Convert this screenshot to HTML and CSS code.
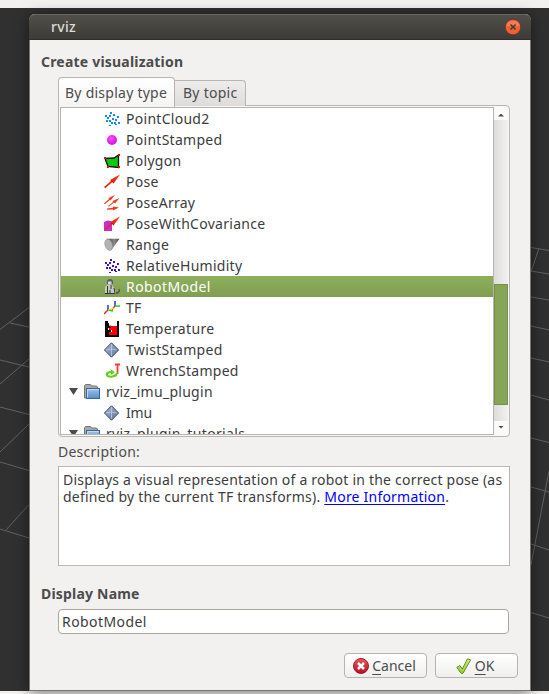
FILE: index.html
```html
<!DOCTYPE html>
<html lang="en">
<head>
<meta charset="utf-8">
<title>rviz</title>
<link rel="stylesheet" href="styles.css">
</head>
<body>
<svg width="0" height="0" class="defs">
  <defs>
    <linearGradient id="blue" x1="0" y1="0" x2="0" y2="1"><stop offset="0" stop-color="#a5c5e8"/><stop offset="1" stop-color="#568dcd"/></linearGradient>
    <linearGradient id="steel" x1="0" y1="0" x2="1" y2="1"><stop offset="0" stop-color="#a9bbd9"/><stop offset="1" stop-color="#607499"/></linearGradient>
    <linearGradient id="red" x1="0" y1="0" x2="0" y2="1"><stop offset="0" stop-color="#ec5853"/><stop offset="1" stop-color="#b40d2c"/></linearGradient>
    <linearGradient id="green" x1="0" y1="0" x2="0" y2="1"><stop offset="0" stop-color="#d0ed8c"/><stop offset="1" stop-color="#9dcb2c"/></linearGradient>
    <radialGradient id="magenta" cx=".4" cy=".35"><stop offset="0" stop-color="#ff4dff"/><stop offset="1" stop-color="#d820dc"/></radialGradient>
    <linearGradient id="cone" x1="0" y1="0" x2="1" y2="0"><stop offset="0" stop-color="#444"/><stop offset=".6" stop-color="#888"/><stop offset="1" stop-color="#444"/></linearGradient>
    <symbol id="i-dots" viewBox="0 0 16 16"><path d="M6 1h2v2H6zM9 3h2v2H9zM1 4h2v2H1zM5 4h2v2H5zM13 5h2v2h-2zM3 6h2v2H3zM8 7h2v2H8zM11 8h2v2h-2zM2 9h2v2H2zM5 9h2v2H5zM14 11h2v2h-2zM10 11h2v2h-2zM7 11h2v2H7zM5 14h2v1H5zM11 13h2v1h-2z" fill="currentColor"/></symbol>
    <symbol id="i-diamond" viewBox="0 0 16 16"><path d="M7.500 .8 14.600 8 7.500 15.200 .4 8z" fill="url(#steel)" stroke="#35466b"/><path d="M7.500 2v12M2 8l5.500-1L13 8" stroke="#d0dcf0" fill="none" stroke-width=".6"/></symbol>
    <symbol id="i-folder" viewBox="0 0 16 16"><path d="M.5 14V1.500l1-1h5l1 1.500h5l1 1V12z" fill="#aaa" stroke="#747474"/><rect x="2.500" y="4.500" width="13" height="10" fill="url(#blue)" stroke="#3465a4"/><path d="M3.500 13.500v-8h11" fill="none" stroke="#c3d9f0"/></symbol>
  </defs>
</svg>
<div class="desktop">
  <svg class="grid" width="549" height="694" viewBox="0 0 549 694">
    <path d="M0 329.500 29 307.500M10 323l19 4M0 360l29 7M0 384l29-25M0 407l29 7.500M0 452l29-28M0 462l29 8.500M0 529l29 9M6 530l23-25.500M531 247.500l18 3M531 271l18 3M531 297l18 3M531 326l18 4M531 358l18 4M531 395l18 5M531 438l18 4.500M531 487l18 5M531 544l18 6M531 612.500l18 5.500M539 248l-8 24M549 471l-18 94"/>
  </svg>
  <div class="strip top"></div>
  <div class="strip bottom"></div>
  <main class="dialog">
    <header class="titlebar"><span class="t-title">rviz</span>
      <svg class="close" width="18" height="18" viewBox="0 0 18 18"><circle cx="9" cy="9" r="7.800" fill="#ef6035" stroke="#65392e"/><path d="M2.200 8a7 7 0 0 1 13.600 0" fill="#f47b58"/><path d="m6.500 6.500 5 5m0-5-5 5" stroke="#443a34" stroke-width="1.500"/></svg>
    </header>
    <div class="content">
      <h2 class="t-create">Create visualization</h2>
      <div class="tabs"><div class="tab active"><span class="t-type">By display type</span></div><div class="tab"><span class="t-topic">By topic</span></div></div>
      <div class="frame">
        <div class="tree">
          <div class="row"><svg class="sky"><use href="#i-dots"/></svg><span>PointCloud2</span></div>
          <div class="row"><svg viewBox="0 0 16 16"><circle cx="8" cy="8" r="5" fill="url(#magenta)"/></svg><span>PointStamped</span></div>
          <div class="row"><svg viewBox="0 0 16 16"><path d="M1 5.500 10 5l4.500-3v12.500L4 13.500z" fill="#0bc80b" stroke="#111" stroke-width="1.300"/><path d="M0 4h2v2H0zM14 1h2v2h-2zM3 13h2v2H3zM14 13h2v2h-2z" fill="red"/></svg><span>Polygon</span></div>
          <div class="row"><svg viewBox="0 0 16 16"><path d="m0 13 7-6-1-1L16 .5l-6.500 9-1-1.500L1.200 14.200z" fill="#f9250a"/><path d="m7 6.500 3 2.500" stroke="#9e1a0c"/></svg><span>Pose</span></div>
          <div class="row"><svg viewBox="0 0 16 16"><path d="M0 8.500 5 4l-.5-1L11 0 6.500 5.500 6 5 .7 9.300zM4 11l5-4-.5-1L15.500 3 11 8.500 10 7.500 4.500 11.800zM3 13.500l6-.8V11.500l6 1-6 3v-1l-6 .3z" fill="#f23b1e"/></svg><span>PoseArray</span></div>
          <div class="row"><svg viewBox="0 0 16 16"><path d="M0 6q5-3 8 0v9H0z" fill="#c62ed0"/><path d="m.5 13 7-6-1-1L16 .5l-6.500 9-1-1.500L1.500 14z" fill="#f9250a"/><path d="m7 6.500 3 2.500" stroke="#9e1a0c"/></svg><span>PoseWithCovariance</span></div>
          <div class="row"><svg viewBox="0 0 16 16"><path d="M3 1.800h12.500L7 13.500z" fill="url(#cone)"/><ellipse cx="4.600" cy="7.800" rx="3.600" ry="5.800" transform="rotate(-18 4.600 7.800)" fill="#b3b3b3" stroke="#999" stroke-width=".6"/></svg><span>Range</span></div>
          <div class="row"><svg class="violet"><use href="#i-dots"/></svg><span>RelativeHumidity</span></div>
          <div class="row selected"><svg viewBox="0 0 16 16"><path d="M3 3q0-3 3-3t3 3v2H3z" fill="#555b70"/><path d="M4 2.500h3.500V5H4z" fill="#d9dde0"/><path d="M1 8q3-4 7-2l3 4 1 4H1z" fill="#c3cac2"/><path d="M3.500 7v7M7 6v4M10 9l1 5M1 14.500h10M6 11v3" stroke="#303530" fill="none"/><path d="M12 14q4 0 3-4" stroke="#4a5148" stroke-width="1.300" fill="none"/></svg><span class="t-robot">RobotModel</span></div>
          <div class="row"><svg viewBox="0 0 16 16"><path d="M4 11V5M11 6V1" stroke="#1721e8" stroke-width="1.400"/><path d="m0 14 4-4m4-.5L11 6" stroke="#e32a16" stroke-width="1.400"/><path d="M11 6h5M4 10l5 1" stroke="#19d31e" stroke-width="1.300"/><path d="m4 10 6-2" stroke="#eadb24"/></svg><span>TF</span></div>
          <div class="row"><svg viewBox="0 0 16 16"><path d="M1 0h3v2h1v3h2v2H4v2h3v2H5v2h8V0h2v16H1z" fill="#080808"/><path d="M5 4l3 1h5v9H5v-3h3V9H5V7h2z" fill="red"/></svg><span class="t-temp">Temperature</span></div>
          <div class="row"><svg><use href="#i-diamond"/></svg><span class="t-temp">TwistStamped</span></div>
          <div class="row"><svg viewBox="0 0 16 16"><path d="M11 1.500h5M13.500 1v10" stroke="#ef3e38" stroke-width="1.800"/><path d="M2 10q1-2 5-2l-1-2 5 3-4 3v-2q-3 0-3 2 4 2 7-1l3-2-1 4q-5 3-10 1Q1 12 2 10z" fill="#5fd315"/></svg><span>WrenchStamped</span></div>
          <div class="row group"><i class="arrow"></i><svg><use href="#i-folder"/></svg><span>rviz_imu_plugin</span></div>
          <div class="row"><svg><use href="#i-diamond"/></svg><span class="t-imu">Imu</span></div>
          <div class="row group"><i class="arrow"></i><svg><use href="#i-folder"/></svg><span class="t-temp">rviz_plugin_tutorials</span></div>
        </div>
        <div class="scrollbar"><div class="step"><i class="up"></i></div><div class="trough"><div class="thumb"></div></div><div class="step"><i class="down"></i></div></div>
      </div>
      <div class="label"><span class="t-desc">Description:</span></div>
      <div class="description"><span class="t-l1">Displays a visual representation of a robot in the correct pose (as</span><br><span class="t-l2">defined by the current TF transforms). <a>More Information</a>.</span></div>
      <h2 class="t-name">Display Name</h2>
      <div class="input"><span class="t-robot">RobotModel</span></div>
      <div class="buttons">
        <div class="button"><svg width="16" height="16" viewBox="0 0 16 16"><circle cx="8" cy="8" r="7.500" fill="url(#red)" stroke="#a3192e"/><path d="m5 5 6 6m0-6-6 6" stroke="#fff" stroke-width="2.500"/></svg><span class="t-cancel"><u>C</u>ancel</span></div>
        <div class="button ok"><svg width="16" height="16" viewBox="0 0 16 16"><path d="m.8 9.500 3-2 2.500 3.500L11.500.8l3.200 1L7 15.300H5z" fill="url(#green)" stroke="#5c9127"/></svg><span class="t-ok"><u>O</u>K</span></div>
      </div>
    </div>
  </main>
</div>
</body>
</html>
```
FILE: styles.css
```css
* { box-sizing: border-box; }
body { margin: 0; font: 14px/21px "Noto Sans", sans-serif; color: #4c4c4c; }
.defs { position: absolute; }
.desktop { position: relative; width: 549px; height: 694px; overflow: hidden; background: #303030; padding: 14px 19px 4px 29px; }
.grid { position: absolute; left: 0; top: 0; fill: none; stroke: #626262; stroke-width: 1; }
.strip { position: absolute; left: 0; width: 549px; background: #f2f1f0; }
.strip.top { top: 0; height: 8px; }
.strip.bottom { bottom: 0; height: 3px; }
.dialog { position: relative; width: 502px; height: 677px; border: 1px solid #77756f; border-top: 0; border-radius: 6px 6px 0 0; background: #f2f1f0; box-shadow: 0 2px 14px rgba(0, 0, 0, .5); }
.titlebar { height: 26px; margin: 0 -1px; padding: 0 9px 0 22px; display: flex; align-items: center; justify-content: space-between; background: linear-gradient(#504f49, #3c3b37); border-top: 1px solid #68665b; border-bottom: 1px solid #302f2c; border-radius: 6px 6px 0 0; color: #dfdbd2; font-weight: 500; }
.t-title { letter-spacing: .3px; margin-top: -2px; }
.content { padding: 11px 20px 0 28px; }
h2 { margin: 0 0 0 -17px; font-size: 14px; line-height: 21px; font-weight: 700; letter-spacing: .2px; }
span { white-space: pre; }
.tabs { display: flex; align-items: flex-end; height: 30px; margin-top: 4px; }
.tab { width: 71px; height: 26px; padding: 1px 0 0 8px; background: linear-gradient(#eeedec, #dddcdb); border: 1px solid #b8b5b2; border-left: 0; border-bottom: 0; border-radius: 0 4px 0 0; letter-spacing: .25px; }
.tab.active { position: relative; z-index: 1; width: 117px; height: 30px; margin-bottom: -1px; padding: 4px 0 0 6px; border-left: 1px solid #b8b5b2; border-radius: 4px 4px 0 0; background: linear-gradient(#fff, #f5f4f3); }
.frame { display: flex; width: 452px; height: 332px; margin-top: -1px; padding: 1px; border: 1px solid #b8b5b2; border-radius: 0 4px 4px 4px; background: #f8f8f7; }
.tree { width: 434px; height: 328px; overflow: hidden; background: #fff; border: 1px solid #b9b3ae; color: #3c3c3c; }
.row { display: flex; align-items: center; height: 21px; padding-left: 43px; gap: 6px; letter-spacing: .28px; }
.row svg { width: 16px; height: 16px; flex: none; }
.row.group { padding-left: 8px; }
.row.group svg { margin: 1px 0 0; }
.row .t-temp { letter-spacing: .34px; }
.row .t-imu { letter-spacing: -.2px; }
.t-robot { letter-spacing: .43px; }
.selected { background: linear-gradient(#8eb05d, #7f9e51); color: #fff; }
.sky { color: #1689f5; }
.violet { color: #3d0ee8; }
.arrow { width: 9px; height: 7px; background: #4c4c4c; clip-path: polygon(0 0, 100% 0, 50% 100%); }
.scrollbar { width: 14px; height: 328px; padding-top: 1px; }
.step { width: 12px; height: 12px; margin-left: 1px; display: flex; align-items: center; justify-content: center; background: #fafafa; }
.step i { width: 6px; height: 3px; margin-top: 2px; background: #4c4c4c; }
.step .down { margin-top: 0; }
.up { clip-path: polygon(50% 0, 100% 100%, 0 100%); }
.down { clip-path: polygon(0 0, 100% 0, 50% 100%); }
.trough { height: 301px; padding-top: 164px; background: linear-gradient(90deg, #dddcdb, #f2f1f0); }
.thumb { height: 121px; background: #86a556; border: 1px solid #73924a; }
.label { height: 30px; padding-top: 4px; letter-spacing: .25px; }
.description { width: 452px; height: 100px; margin-top: -1px; padding: 4px; border: 1px solid #b9b6b2; background: #fff; color: #3c3c3c; line-height: 17px; letter-spacing: .215px; }
.description a { color: #0000f5; text-decoration: underline; text-underline-offset: 2px; }
.t-name { margin-top: 17px; }
.input { width: 451px; height: 25px; margin: 5px 0 0; padding: 1px 3px; border: 1px solid #aaa79f; border-radius: 4px; background: #fff; color: #3c3c3c; }
.buttons { display: flex; justify-content: flex-end; gap: 8px; margin: 19px -8px 0 0; }
.button { display: flex; justify-content: center; gap: 3px; width: 83px; height: 25px; padding: 1px 2px 1px 0; border: 1px solid #b7b4b0; border-radius: 4px; background: linear-gradient(#fff, #f0efee); }
.button.ok { padding-right: 3px; }
.button svg { margin-top: 3px; }
u { text-underline-offset: 3px; }
```
